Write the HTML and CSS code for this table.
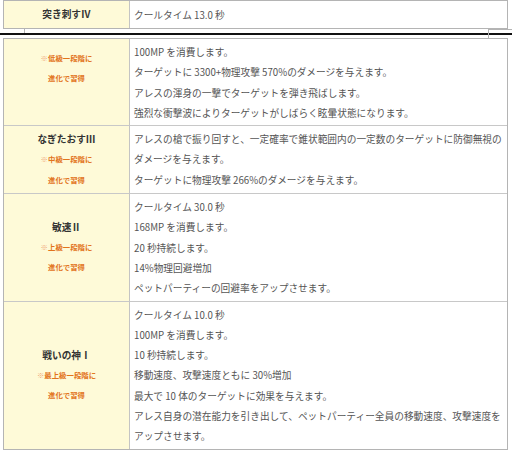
FILE: index.html
```html
<!DOCTYPE html>
<html lang="ja">
<head>
<meta charset="utf-8">
<link rel="stylesheet" href="styles.css">
</head>
<body>
<div class="wrap">
  <div class="grid top">
    <div class="name"><span class="title">突き刺すⅣ</span></div>
    <div class="desc">クールタイム 13.0 秒</div>
  </div>
</div>
<div class="gap">
  <span class="tick-left"></span>
  <span class="tick-right"></span>
</div>
<div class="wrap">
  <div class="grid main">
    <div class="name name-top">
      <span class="note"><span class="mark">※</span>低級一段階に</span>
      <span class="note">進化で習得</span>
    </div>
    <div class="desc">100MP を消費します。<br>ターゲットに 3300+物理攻撃 570%のダメージを与えます。<br>アレスの渾身の一撃でターゲットを弾き飛ばします。<br>強烈な衝撃波によりターゲットがしばらく眩暈状態になります。</div>

    <div class="name">
      <span class="title">なぎたおすⅢ</span>
      <span class="note"><span class="mark">※</span>中級一段階に</span>
      <span class="note">進化で習得</span>
    </div>
    <div class="desc">アレスの槍で振り回すと、一定確率で錐状範囲内の一定数のターゲットに防御無視の<br>ダメージを与えます。<br>ターゲットに物理攻撃 266%のダメージを与えます。</div>

    <div class="name">
      <span class="title">敏速Ⅱ</span>
      <span class="note"><span class="mark">※</span>上級一段階に</span>
      <span class="note">進化で習得</span>
    </div>
    <div class="desc">クールタイム 30.0 秒<br>168MP を消費します。<br>20 秒持続します。<br>14%物理回避増加<br>ペットパーティーの回避率をアップさせます。</div>

    <div class="name last">
      <span class="title">戦いの神Ⅰ</span>
      <span class="note"><span class="mark">※</span>最上級一段階に</span>
      <span class="note">進化で習得</span>
    </div>
    <div class="desc last">クールタイム 10.0 秒<br>100MP を消費します。<br>10 秒持続します。<br>移動速度、攻撃速度ともに 30%増加<br>最大で 10 体のターゲットに効果を与えます。<br>アレス自身の潜在能力を引き出して、ペットパーティー全員の移動速度、攻撃速度を<br>アップさせます。</div>
  </div>
</div>
</body>
</html>
```

FILE: styles.css
```css
* { box-sizing: border-box; }
html, body { margin: 0; padding: 0; background: #ffffff; }
body {
  width: 512px;
  height: 452px;
  overflow: hidden;
  font-family: "Noto Sans CJK JP", "Noto Sans", sans-serif;
  font-size: 9.7px;
  color: #555555;
}
.wrap {
  padding-left: 3px;
  width: 508px;
}
.grid {
  display: grid;
  grid-template-columns: 126px 1fr;
  border: 1px solid #b4b4b4;
}
.top {
  height: 29px;
}
.top .name, .top .desc {
  display: flex;
  align-items: center;
  border-bottom: none;
}
.name {
  background: #fefad8;
  border-right: 1px solid #c4c4c4;
  border-bottom: 1px solid #c8c8c8;
  display: flex;
  flex-direction: column;
  justify-content: center;
  align-items: center;
  line-height: 20.3px;
  padding: 3px 2px;
}
.name-top {
  justify-content: flex-start;
  padding-top: 9px;
}
.desc {
  border-bottom: 1px solid #c8c8c8;
  line-height: 20.3px;
  padding: 3px 4px 2px 4px;
  white-space: nowrap;
}
.name.last, .desc.last { border-bottom: none; }
.top .name { justify-content: center; }
.title {
  font-weight: bold;
  color: #333333;
}
.note {
  font-size: 7.4px;
  font-weight: bold;
  color: #e2741c;
  line-height: 20.3px;
}
.mark {
  color: #f0a878;
  font-weight: normal;
}
.gap {
  display: flex;
  justify-content: space-between;
  align-items: flex-start;
  height: 9px;
  padding-left: 24px;
  background: linear-gradient(to bottom, transparent 4px, #111111 4px, #111111 6px, transparent 6px);
}
.tick-left {
  width: 1px;
  height: 4px;
  background: #b4b4b4;
}
.tick-right {
  width: 24px;
  height: 9px;
  border-left: 1px solid #b4b4b4;
  border-top: 1px solid #b4b4b4;
}
```
